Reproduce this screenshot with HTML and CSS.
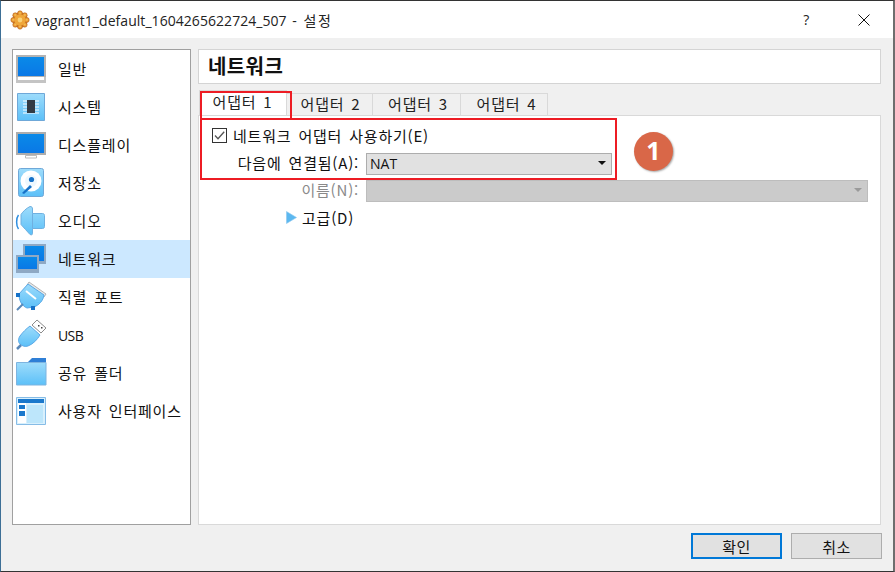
FILE: index.html
```html
<!DOCTYPE html>
<html lang="ko">
<head>
<meta charset="utf-8">
<title>설정</title>
<link rel="stylesheet" href="styles.css">
</head>
<body>
<div class="window">
  <svg width="0" height="0" class="defs">
    <defs>
      <linearGradient id="scr" x1="0" y1="0" x2="0" y2="1"><stop offset="0" stop-color="#0a8ae8"/><stop offset="1" stop-color="#0a78e6"/></linearGradient>
      <linearGradient id="lite" x1="0" y1="0" x2="0" y2="1"><stop offset="0" stop-color="#9edcfb"/><stop offset="1" stop-color="#5cc0f8"/></linearGradient>
      <radialGradient id="sun" cx=".5" cy=".45" r=".55"><stop offset="0" stop-color="#f7c75a"/><stop offset="1" stop-color="#dd7a1c"/></radialGradient>
    </defs>
  </svg>
  <header class="titlebar">
    <svg class="app-icon" width="20" height="20" viewBox="0 0 20 20"><g fill="url(#sun)" stroke="#b8651d" stroke-width=".6"><circle cx="10" cy="10" r="7.4"/><circle cx="10" cy="3.2" r="2.4"/><circle cx="10" cy="16.8" r="2.4"/><circle cx="3.2" cy="10" r="2.4"/><circle cx="16.8" cy="10" r="2.4"/><circle cx="5.2" cy="5.2" r="2.4"/><circle cx="14.8" cy="5.2" r="2.4"/><circle cx="5.2" cy="14.8" r="2.4"/><circle cx="14.8" cy="14.8" r="2.4"/></g><circle cx="10" cy="10" r="5.8" fill="#efa63a"/><circle cx="10" cy="10" r="2.4" fill="#f8d27a"/></svg>
    <span class="title">vagrant1_default_1604265622724_507 - <span class="title-ko">설정</span></span>
    <span class="help">?</span>
    <svg class="close" width="12" height="12" viewBox="0 0 12 12"><path d="M.5.5l11 11M11.500.5l-11 11" stroke="#111" fill="none"/></svg>
  </header>
  <div class="body">
    <div class="main">
      <nav class="sidebar">
        <div class="item"><svg class="ic" viewBox="0 0 32 32"><path d="M1 2h30v22h-30z" fill="#b3b3b3"/><path d="M3 4h26v19h-26z" fill="url(#scr)"/><path d="M1 24h2v3h26v-3h2v6h-30z" fill="#c4c4c4"/><path d="M3 24h26v3h-26z" fill="#fff"/></svg><span>일반</span></div>
        <div class="item"><svg class="ic" viewBox="0 0 32 32"><path d="M2.500 2.500h27v27h-27z" fill="url(#lite)" stroke="#6fa8d8"/><path d="M8 10h16M8 13h16M8 16h16M8 19h16M8 22h16" stroke="#fff"/><path d="M12 9h8v13h-8z" fill="#333b44"/></svg><span>시스템</span></div>
        <div class="item"><svg class="ic" viewBox="0 0 32 32"><path d="M1 3h30v23h-30z" fill="#adadad"/><path d="M3 5h26v19h-26z" fill="url(#scr)"/><path d="M10.500 26.500h11v2.500h-11z" fill="#fff" stroke="#bbb"/></svg><span>디스플레이</span></div>
        <div class="item"><svg class="ic" viewBox="0 0 32 32"><rect x="3.500" y="1.500" width="25" height="28" rx="2" fill="url(#lite)" stroke="#6fa8d8"/><circle cx="16" cy="14" r="10.500" fill="#fff"/><circle cx="16" cy="14" r="6" fill="#eef8fe"/><circle cx="16.500" cy="12.500" r="2.600" fill="#1672c8"/><path d="M7 26l8-8 2 2-8 7z" fill="#1672c8"/></svg><span>저장소</span></div>
        <div class="item"><svg class="ic" viewBox="0 0 32 32"><path d="M15 1.500c2 0 2.500 1 2.500 2.500v4.500h10c1.500 0 2 1 2 2v11c0 1-.5 2-2 2h-10v5c0 1.500-1 1.500-2.500 1-3-3-6-7-9-10v-10c2-3 5-6 9-8z" fill="url(#lite)" stroke="#6fb0e0"/><path d="M17.500 8.500v15" stroke="#6fb0e0"/><path d="M3.500 10c-2.500 3-2.500 11 0 14" fill="none" stroke="#2f8fe0" stroke-width="1.500"/></svg><span>오디오</span></div>
        <div class="item"><svg class="ic" viewBox="0 0 32 32"><path d="M8 1h23v20h-23z" fill="#8fa9c4"/><path d="M10 3h19v15h-19z" fill="url(#scr)"/><path d="M1 12h23v18h-23z" fill="#8fa9c4"/><path d="M3 14h19v12h-19z" fill="url(#scr)"/></svg><span>네트워크</span></div>
        <div class="item"><svg class="ic" viewBox="0 0 32 32"><path d="M14 1l17 12-2 3-17-12z" fill="#e8e8e8" stroke="#b5b5b5"/><path d="M13 3l16 11c-1 6-5 10-10 12l-7 1c-5-2-8-7-8-14z" fill="url(#lite)" stroke="#5aa8e6"/><path d="M11 10l10 8" stroke="#fff" stroke-width="2"/><path d="M1 12h4v4h-4zM16 25h4v4h-4z" fill="#1672c8"/><path d="M8 23l-6 6" stroke="#5a88b8" stroke-width="2"/></svg><span>직렬 포트</span></div>
        <div class="item"><svg class="ic" viewBox="0 0 32 32"><path d="M22 1l9 8-5 5-9-8z" fill="#fff" stroke="#8a8a8a"/><path d="M23 6h1.500v1.500h-1.500zM26 8h1.500v1.500h-1.500z" fill="#444"/><path d="M15 7l10 9c-3 5-7 9-12 11-3 1-6 0-8-2s-2-5 0-8c3-4 6-7 10-10z" fill="url(#lite)" stroke="#5aa8e6"/><path d="M6 26l-4 4" stroke="#5a88b8" stroke-width="2.500"/></svg><span class="latin">USB</span></div>
        <div class="item"><svg class="ic" viewBox="0 0 32 32"><path d="M13 5l4-4h14v7h-18z" fill="#2f7fd6"/><path d="M1.500 5.500h29.500v22.500h-29.500z" fill="url(#lite)" stroke="#7db4e0"/></svg><span>공유 폴더</span></div>
        <div class="item"><svg class="ic" viewBox="0 0 32 32"><path d="M1.500 2.500h29v27h-29z" fill="#d8f0fd" stroke="#86bce6"/><path d="M3 4h26v4h-26z" fill="#1a78cc"/><path d="M3 8h8v20h-8z" fill="#fff"/><path d="M4 10h6v4h-6zM4 16h6v5h-6z" fill="#1a78cc"/><path d="M12 10h16v18h-16z" fill="#bde6fb"/></svg><span>사용자 인터페이스</span></div>
      </nav>
      <section class="content">
        <h1 class="page-title">네트워크</h1>
        <div class="tabs">
          <div class="tab active">어댑터 1</div>
          <div class="tab">어댑터 2</div>
          <div class="tab">어댑터 3</div>
          <div class="tab">어댑터 4</div>
        </div>
        <div class="panel">
          <div class="check-row">
            <span class="checkbox"><svg width="13" height="13" viewBox="0 0 13 13"><path d="M2 6.500l3 3.200 6.200-7" fill="none" stroke="#555" stroke-width="1.300"/></svg></span>
            <span>네트워크 어댑터 사용하기(E)</span>
          </div>
          <div class="field-row">
            <label class="field-label">다음에 연결됨(A):</label>
            <div class="select short"><span>NAT</span><i class="caret"></i></div>
          </div>
          <div class="field-row disabled">
            <label class="field-label">이름(N):</label>
            <div class="select wide"><span></span><i class="caret"></i></div>
          </div>
          <div class="adv-row">
            <svg width="11" height="13" viewBox="0 0 11 13"><path d="M.5.500l10 6-10 6z" fill="#5cb8f0" stroke="#8cc8ee" stroke-width=".6"/></svg>
            <span>고급(D)</span>
          </div>
        </div>
      </section>
    </div>
    <footer class="buttons">
      <button class="btn primary">확인</button>
      <button class="btn">취소</button>
    </footer>
  </div>
  <div class="mark mark-tab"></div>
  <div class="mark mark-form"></div>
  <div class="badge">1</div>
</div>
</body>
</html>
```
FILE: styles.css
```css
* { box-sizing: border-box; }
html, body { margin: 0; padding: 0; }
body {
  width: 895px;
  height: 572px;
  overflow: hidden;
  background: #fff;
  font-family: "Noto Sans CJK KR", "Open Sans", sans-serif;
  font-size: 15px;
  letter-spacing: .8px;
  word-spacing: 2px;
  color: #111;
}
.defs { position: absolute; }
.window {
  position: relative;
  width: 895px;
  height: 572px;
  display: flex;
  flex-direction: column;
  border-top: 1px solid #333;
  border-right: 2px solid #6e6e6e;
  border-bottom: 1px solid #333;
  border-left: 1px solid #3d6f96;
}
.titlebar {
  height: 37px;
  flex: none;
  background: #fff;
  display: flex;
  align-items: center;
  padding-left: 9px;
}
.app-icon { flex: none; }
.title {
  margin-left: 5px;
  font-family: "Open Sans", "Noto Sans CJK KR", sans-serif;
  font-size: 14px;
  letter-spacing: .05px;
  word-spacing: 2px;
  white-space: nowrap;
  color: #222;
}
.title-ko { letter-spacing: 1.5px; margin-left: 1px; }
.help {
  margin-left: auto;
  font-family: "Open Sans", sans-serif;
  font-size: 14px;
  color: #222;
}
.close { margin-left: 48px; margin-right: 23px; }
.body {
  flex: 1;
  min-height: 0;
  background: #f0f0f0;
  display: flex;
  flex-direction: column;
  padding: 11px 11px 0;
}
.main { display: flex; gap: 7px; height: 476px; }
.sidebar {
  width: 179px;
  flex: none;
  background: #fff;
  border: 1px solid #a0a0a0;
}
.item {
  height: 38px;
  display: flex;
  align-items: center;
  padding-left: 2px;
  white-space: nowrap;
}
.item span { position: relative; top: -1px; }
.item .latin { font-family: "Open Sans", sans-serif; font-size: 14px; letter-spacing: -.6px; top: 0; }
.item:nth-child(6) { background: #cce8ff; }
.ic { width: 32px; height: 32px; flex: none; margin-right: 11px; }
.content { width: 683px; flex: none; display: flex; flex-direction: column; }
.page-title {
  margin: 0;
  height: 35px;
  background: #fff;
  border: 1px solid #d4d4d4;
  padding-left: 9px;
  font-size: 20px;
  font-weight: 700;
  line-height: 32px;
  letter-spacing: .4px;
}
.tabs { display: flex; padding: 9px 0 0 1px; height: 31px; flex: none; }
.tab {
  width: 88px;
  height: 22px;
  padding-left: 3px;
  background: #f0f0f0;
  border: 1px solid #d9d9d9;
  border-left: 0;
  border-bottom: 0;
  text-align: center;
  line-height: 20px;
  color: #222;
}
.tab:nth-child(2) { width: 86px; padding-left: 2px; }
.tab:nth-child(4) { width: 87px; padding-left: 5px; }
.tab.active {
  width: 88px;
  height: 25px;
  padding: 0 1px 0 0;
  margin-top: -3px;
  background: #fff;
  border-left: 1px solid #d9d9d9;
  position: relative;
  z-index: 1;
  line-height: 22px;
}
.panel {
  flex: 1;
  background: #fff;
  border: 1px solid #d9d9d9;
  padding: 8px 0 0 13px;
}
.check-row {
  height: 23px;
  display: flex;
  align-items: center;
  gap: 6px;
}
.checkbox {
  width: 15px;
  height: 15px;
  border: 1px solid #333;
  background: #fff;
  display: flex;
  align-items: center;
  justify-content: center;
}
.field-row {
  display: grid;
  grid-template-columns: 147px auto;
  column-gap: 7px;
  align-items: center;
  height: 22px;
  margin-top: 5px;
}
.field-label { text-align: right; white-space: nowrap; padding-bottom: 3px; }
.select {
  height: 22px;
  background: #e1e1e1;
  border: 1px solid #adadad;
  display: flex;
  align-items: center;
  justify-content: space-between;
  padding: 0 5px 2px 3px;
  font-size: 14px;
  letter-spacing: 0;
  font-family: "Open Sans", sans-serif;
}
.select.short { width: 246px; }
.select.wide { width: 502px; }
.caret {
  width: 0;
  height: 0;
  border-left: 4px solid transparent;
  border-right: 4px solid transparent;
  border-top: 4px solid #111;
}
.disabled .field-label { color: #8a8a8a; }
.disabled .select { background: #cbcbcb; border-color: #bdbdbd; }
.disabled .caret { border-top-color: #9a9a9a; }
.adv-row {
  display: flex;
  align-items: center;
  gap: 5px;
  height: 22px;
  margin-top: 5px;
  margin-left: 74px;
}
.buttons {
  display: flex;
  justify-content: flex-end;
  gap: 9px;
  padding-top: 8px;
}
.btn {
  width: 91px;
  height: 26px;
  padding: 0;
  background: #e1e1e1;
  border: 1px solid #adadad;
  font: inherit;
  color: #111;
  letter-spacing: .5px;
}
.btn.primary { border: 2px solid #0078d7; }
.mark { position: absolute; border: 2px solid #ed1c24; z-index: 2; pointer-events: none; }
.mark-tab { left: 199px; top: 90px; width: 92px; height: 29px; }
.mark-form { left: 199px; top: 117px; width: 417px; height: 62px; }
.badge {
  position: absolute;
  left: 633px;
  top: 131px;
  width: 39px;
  height: 39px;
  border-radius: 50%;
  background: #d96748;
  box-shadow: 1px 1px 2px rgba(0,0,0,.35);
  color: #fff;
  font-family: "Open Sans", sans-serif;
  font-weight: 700;
  font-size: 25px;
  letter-spacing: 0;
  line-height: 37px;
  text-align: center;
  z-index: 3;
}
```
